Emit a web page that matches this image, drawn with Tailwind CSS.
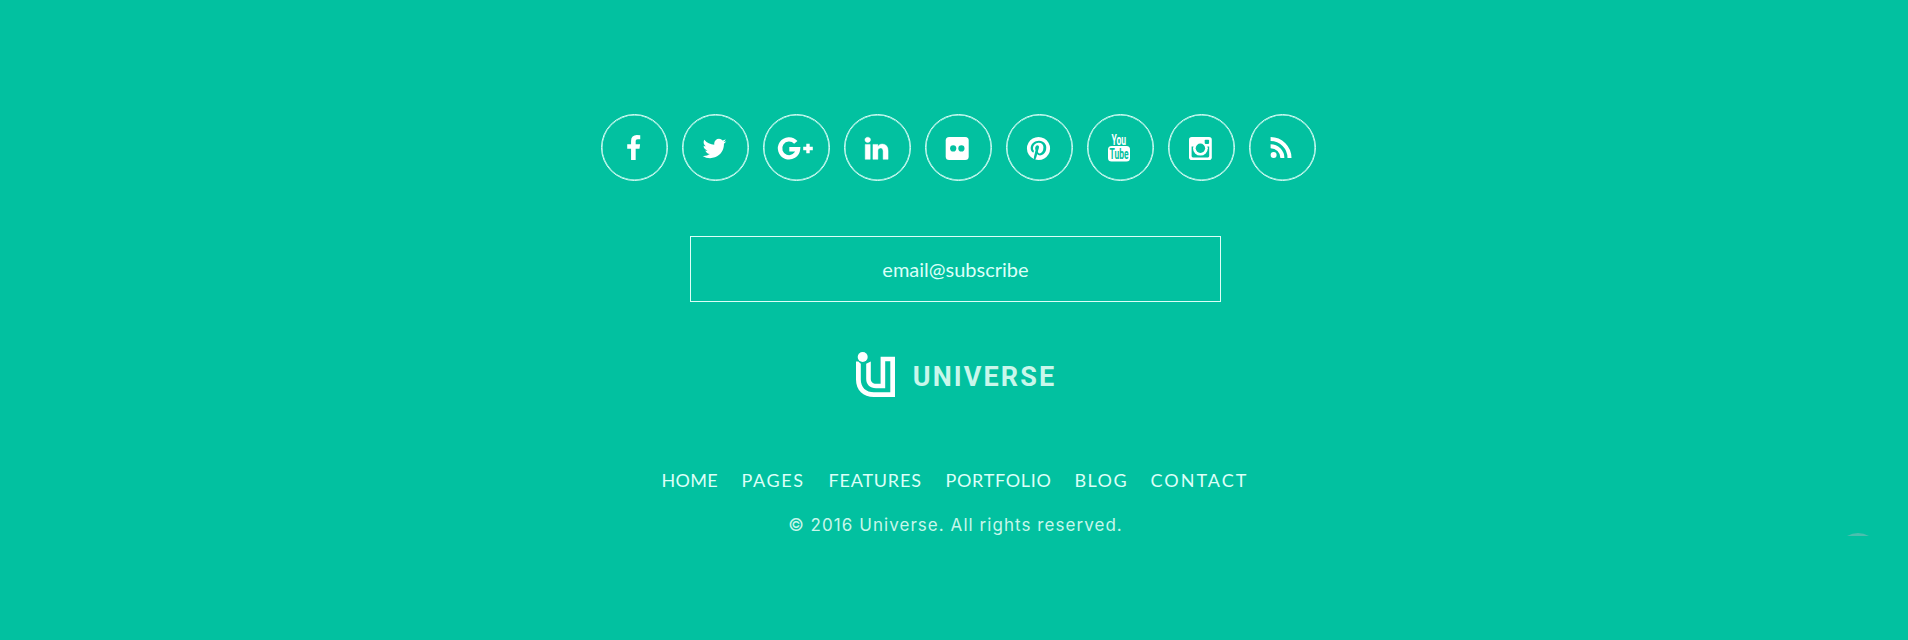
<!DOCTYPE html>
<html lang="en">
<head>
<meta charset="utf-8">
<title>Universe</title>
<script src="https://cdn.jsdelivr.net/npm/@tailwindcss/browser@4"></script>
</head>
<body class="bg-[#02c1a0] text-white">
<footer class="relative flex h-[640px] flex-col items-center overflow-hidden pt-[114px]">
  <div class="ml-[9px] flex gap-[14px]">
    <a class="flex size-[67px] items-center justify-center rounded-full border border-[#dcfff8] shadow-[inset_0_0_0_0.5px_#dcfff8]"><svg class="mt-[1px] mr-[3px] size-[27px]" viewBox="0 0 1792 1792" fill="currentColor"><path d="M1343 12v264h-157q-86 0-116 36t-30 108v189h293l-39 296h-254v759h-306v-759h-255v-296h255v-218q0-186 104-288.5t277-102.5q147 0 228 12z"/></svg></a>
    <a class="flex size-[67px] items-center justify-center rounded-full border border-[#dcfff8] shadow-[inset_0_0_0_0.5px_#dcfff8]"><svg class="mt-[1px] mr-[3px] size-[27px]" viewBox="0 0 1792 1792" fill="currentColor"><path d="M1684 408q-67 98-162 167 1 14 1 42 0 130-38 259.5t-115.5 248.5-184.5 210.5-258 146-323 54.5q-271 0-496-145 35 4 78 4 225 0 401-138-105-2-188-64.5t-114-159.5q33 5 61 5 43 0 85-11-112-23-185.5-111.5t-73.5-205.5v-4q68 38 146 41-66-44-105-115t-39-154q0-88 44-163 121 149 294.5 238.5t371.5 99.5q-8-38-8-74 0-134 94.5-228.5t228.5-94.5q140 0 236 102 109-21 205-78-37 115-142 178 93-10 186-50z"/></svg></a>
    <a class="flex size-[67px] items-center justify-center rounded-full border border-[#dcfff8] shadow-[inset_0_0_0_0.5px_#dcfff8]"><svg class="mt-[1px] mr-[2px] size-[27px] overflow-visible" viewBox="0 0 27 27" fill="none" stroke="currentColor"><path stroke-width="4.4" d="M13.8 7.4A9 9 0 1 0 16 14.2H7.3"/><path stroke-width="3.4" d="M21.2 13.5h9.6M26 8.7v9.6"/></svg></a>
    <a class="flex size-[67px] items-center justify-center rounded-full border border-[#dcfff8] shadow-[inset_0_0_0_0.5px_#dcfff8]"><svg class="mt-[1px] mr-[2px] size-[27px]" viewBox="0 0 1792 1792" fill="currentColor" stroke="currentColor" stroke-width="30"><path d="M477 625v991h-330v-991h330zm21-306q1 73-50.5 122t-135.5 49h-2q-82 0-132-49t-50-122q0-74 51.5-122.5t134.5-48.5 133 48.5 51 122.5zm1166 729v568h-329v-530q0-105-40.5-164.5t-126.5-59.5q-63 0-105.5 34.5t-63.5 85.5q-11 30-11 81v553h-329q2-399 2-647t-1-296l-1-48h329v144h-2q20-32 41-56t56.5-52 87-43.5 114.5-15.5q171 0 275 113.5t104 332.5z"/></svg></a>
    <a class="flex size-[67px] items-center justify-center rounded-full border border-[#dcfff8] shadow-[inset_0_0_0_0.5px_#dcfff8]"><svg class="mt-[1px] mr-[2px] size-[27px]" viewBox="0 0 27 27"><rect x="1.7" y="2" width="23" height="23" rx="3.5" fill="#fff"/><circle cx="9.2" cy="13.4" r="3.1" fill="#02c1a0"/><circle cx="17.4" cy="13.4" r="3.1" fill="#02c1a0"/></svg></a>
    <a class="flex size-[67px] items-center justify-center rounded-full border border-[#dcfff8] shadow-[inset_0_0_0_0.5px_#dcfff8]"><svg class="mt-[1px] mr-[3px] size-[27px]" viewBox="0 0 1792 1792" fill="currentColor"><path d="M1664 896q0 209-103 385.5t-279.5 279.5-385.5 103q-111 0-218-32 59-93 78-164 9-34 54-211 20 39 73 67.5t114 28.5q121 0 216-68.5t147-188.5 52-270q0-114-59.5-214t-172.5-163-255-63q-105 0-196 29t-154.5 77-109 110.5-67 129.5-21.5 134q0 104 40 183t117 111q30 12 38-20 2-7 8-31t8-30q6-23-11-43-51-61-51-151 0-151 104.5-259.5t273.5-108.5q151 0 235.5 82t84.5 213q0 170-68.5 289t-175.5 119q-61 0-98-43.5t-23-104.5q8-35 26.5-93.5t30-103 11.5-75.5q0-50-27-83t-77-33q-62 0-105 57t-43 142q0 73 25 122l-99 418q-17 70-13 177-206-91-333-281t-127-423q0-209 103-385.5t279.5-279.5 385.5-103 385.5 103 279.5 279.5 103 385.5z"/></svg></a>
    <a class="flex size-[67px] items-center justify-center rounded-full border border-[#dcfff8] shadow-[inset_0_0_0_0.5px_#dcfff8]"><svg class="mr-[2px] size-[27px] overflow-visible" viewBox="0 0 27 27" font-family="Roboto, sans-serif"><text x="5.4" y="11" font-size="14.5" font-weight="700" textLength="14.6" lengthAdjust="spacingAndGlyphs" fill="#fff">You</text><rect x="2" y="12" width="22" height="15.5" rx="3.5" fill="#fff"/><text x="3.6" y="24.9" font-size="14.5" font-weight="700" textLength="19" lengthAdjust="spacingAndGlyphs" fill="#02c1a0">Tube</text></svg></a>
    <a class="flex size-[67px] items-center justify-center rounded-full border border-[#dcfff8] shadow-[inset_0_0_0_0.5px_#dcfff8]"><svg class="mt-[1px] mr-[2px] size-[27px]" viewBox="0 0 27 27"><rect x="2" y="2" width="22.8" height="23" rx="2.8" fill="#fff"/><path d="M4.6 11.4H22.2V21a1.4 1.4 0 0 1-1.4 1.4H6A1.4 1.4 0 0 1 4.6 21z" fill="#02c1a0"/><circle cx="13.4" cy="13.2" r="7.4" fill="#fff"/><circle cx="13.4" cy="13.2" r="4.7" fill="#02c1a0"/><rect x="17.7" y="4.7" width="4.4" height="4.2" rx=".8" fill="#02c1a0"/></svg></a>
    <a class="flex size-[67px] items-center justify-center rounded-full border border-[#dcfff8] shadow-[inset_0_0_0_0.5px_#dcfff8]"><svg class="mt-[1px] mr-[2px] size-[27px]" viewBox="0 0 27 27"><circle cx="5.6" cy="20" r="3" fill="#fff"/><path d="M2.6 11.2A11.8 11.8 0 0 1 14.4 23M2.6 4.1A18.9 18.9 0 0 1 21.5 23" fill="none" stroke="#fff" stroke-width="4"/></svg></a>
  </div>
  <input class="mt-[55px] ml-[3px] h-[66px] w-[531px] border border-[#dcfff8] bg-transparent text-center font-[Lato,sans-serif] text-[20px] text-[#dcfff8] outline-none placeholder:text-[#dcfff8] placeholder:opacity-100" placeholder="email@subscribe">
  <div class="mt-[50px] ml-[4px] flex h-[45px] items-center">
    <svg class="h-[45px] w-[39px]" viewBox="0 0 39 45"><circle cx="6.7" cy="5" r="5" fill="#fff"/><path d="M2.4 9.5L4.8 11.8V27.5C4.8 35.5 10 40.3 18 40.3H34.3V9.3H29.2V36.3H20C14 36.3 10.2 32.500 10.200 27V11.800L14.800 9.500V27C14.800 30 17 31.800 20 31.800H24.600V4.800H39V45H18C7 45 0 38 0 27.500V9.500z" fill="#fff"/></svg>
    <span class="mt-[6px] ml-[18px] font-[Roboto,sans-serif] text-[27px] leading-none font-bold tracking-[2.1px] text-[#c8f7eb]">UNIVERSE</span>
  </div>
  <nav class="mt-[69px] flex h-[28px] items-center font-[Lato,sans-serif] text-[18px] leading-none text-[#dcfff8]">
    <a class="w-[80px] tracking-[0.3px]">HOME</a><a class="w-[87px] tracking-[1.6px]">PAGES</a><a class="w-[117px] tracking-[0.8px]">FEATURES</a><a class="w-[129px] tracking-[0.7px]">PORTFOLIO</a><a class="w-[76px] tracking-[1.4px]">BLOG</a><a class="w-[96px] tracking-[2px]">CONTACT</a>
  </nav>
  <p class="mt-[17px] ml-[3px] font-[Inter,sans-serif] text-[17px] leading-[28px] tracking-[1.05px] text-[#c8f7eb]">© 2016 Universe. All rights reserved.</p>
  <svg class="absolute top-[532px] left-[1847px] h-[4px] w-[22px]" viewBox="0 0 22 4"><path d="M0 4Q11-2 22 4z" fill="#4bbfae"/></svg>
</footer>
</body>
</html>
